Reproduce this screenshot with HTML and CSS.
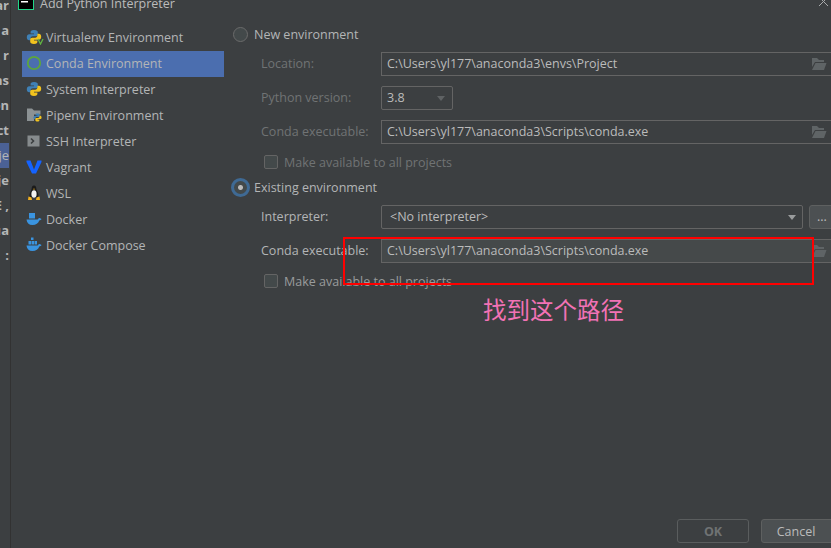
FILE: index.html
```html
<!DOCTYPE html>
<html lang="zh-CN">
<head>
	<meta charset="UTF-8">
	<title>Add Python Interpreter</title>
	<link rel="stylesheet" href="styles.css">
</head>
<body>
	<svg class="defs" width="0" height="0">
		<symbol id="py" viewBox="0 0 16 16">
			<path fill="#3f80b5" d="M8 1C5.2 1 4.6 2 4.6 3.2v1.4H8v.6H3.2C1.8 5.2.8 6.4.8 8.2s1 3 2.3 3h1.5V9.4c0-1.2 1-2.1 2.2-2.1h3.2c1 0 1.8-.8 1.8-1.8V3.200C11.800 2 10.800 1 8 1z"/>
			<path fill="#f2c31e" d="M8 15c2.800 0 3.400-1 3.400-2.200v-1.400H8v-.6h4.800c1.400 0 2.400-1.200 2.400-3s-1-3-2.300-3h-1.500v1.800c0 1.200-1 2.100-2.200 2.100H6.000c-1 0-1.800.8-1.800 1.800v2.300C4.200 14 5.200 15 8 15z"/>
		</symbol>
		<symbol id="whale" viewBox="0 0 16 16">
			<path fill="#3a94e0" d="M.5 8.500h11c.6-.1 1-.6 1.100-1.300.7-.4 1.200-.2 2.900.8-.5 1-1.300 1.300-2.200 1.400C12.200 12.200 10 14 6.500 14 2.800 14 .8 12 .5 8.500z"/>
		</symbol>
		<symbol id="folder" viewBox="0 0 16 14">
			<path fill="#5f6466" d="M1 1h5l2 2h5v2H4L1 10z"/>
			<path fill="#5f6466" d="M4.500 6H15.500L13 13H1z"/>
		</symbol>
	</svg>

	<div class="page">
		<div class="behind">
			<span>ar</span>
			<span>a</span>
			<span>r</span>
			<span>ns</span>
			<span>on</span>
			<span>ct</span>
			<span class="cur">oje</span>
			<span>oje</span>
			<span>, E</span>
			<span>ua</span>
			<span>:</span>
		</div>

		<div class="dialog">
			<div class="title">
				<svg class="logo" width="16" height="20" viewBox="0 0 16 20">
					<rect x=".5" y=".5" width="15" height="19" fill="#000" stroke="#21d789"/>
					<rect x="3" y="11" width="7" height="1.500" fill="#fff"/>
					<rect x="3" y="5" width="8" height="3" fill="#fff"/>
				</svg>
				<span class="title-text">Add Python Interpreter</span>
				<svg class="close" width="10" height="10" viewBox="0 0 10 10">
					<path d="M0 1l9 9M9 1l-9 9" stroke="#a9abac" fill="none"/>
				</svg>
			</div>

			<div class="main">
				<ul class="types">
					<li>
						<svg class="ico" width="16" height="16"><use href="#py"/></svg>
						<svg class="ico-v" width="7" height="7" viewBox="0 0 7 7"><path d="M1 1l2.500 5L6 1" stroke="#62b543" stroke-width="1.300" fill="none"/></svg>
						Virtualenv Environment
					</li>
					<li class="active">
						<svg class="ico" width="16" height="16" viewBox="0 0 16 16">
							<circle cx="8" cy="8" r="6.200" fill="none" stroke="#5da63c" stroke-width="1.800"/>
						</svg>
						Conda Environment
					</li>
					<li>
						<svg class="ico" width="16" height="16"><use href="#py"/></svg>
						System Interpreter
					</li>
					<li>
						<svg class="ico" width="16" height="16" viewBox="0 0 16 16">
							<path fill="#8c9294" d="M1 1.500h5l2 2h6.500v4H8V14H1z"/>
							<svg x="7" y="6" width="9" height="9" viewBox="0 0 16 16"><use href="#py" width="16" height="16"/></svg>
						</svg>
						Pipenv Environment
					</li>
					<li>
						<svg class="ico" width="16" height="16" viewBox="0 0 16 16">
							<rect x="1.500" y="2.500" width="12" height="11" fill="#868b8d"/>
							<path d="M5 5.500l2.500 2.500L5 10.500" stroke="#3c3f41" stroke-width="1.600" fill="none"/>
						</svg>
						SSH Interpreter
					</li>
					<li>
						<svg class="ico" width="16" height="16" viewBox="0 0 16 16">
							<path fill="#1563ff" d="M.5 1.500h4l3.500 9 3.500-9h4V3L10 14.500H6L.5 3z"/>
						</svg>
						Vagrant
					</li>
					<li>
						<svg class="ico" width="16" height="16" viewBox="0 0 16 16">
							<path fill="#1b1b1b" d="M8 .5c-1.800 0-2.300 1.500-2.300 3 0 1.500-2.200 4-2.200 6.500 0 1 .4 2 1 2.500h7c.6-.5 1-1.500 1-2.500 0-2.500-2.200-5-2.200-6.500C10.300 2 9.800.5 8 .5z"/>
							<ellipse cx="8" cy="9" rx="2.600" ry="3.800" fill="#f1f1f1"/>
							<path fill="#f2b01e" d="M2.500 11.500l3 1 .5 2.500H2zM13.500 11.500l-3 1-.5 2.500h4zM7 3.800h2L8 5z"/>
						</svg>
						WSL
					</li>
					<li>
						<svg class="ico" width="16" height="16" viewBox="0 0 16 16">
							<use href="#whale" width="16" height="16"/>
							<rect x="3" y="2" width="6" height="5.500" fill="#3a94e0"/>
						</svg>
						Docker
					</li>
					<li>
						<svg class="ico" width="16" height="16" viewBox="0 0 16 16">
							<use href="#whale" width="16" height="16"/>
							<rect x="5" y=".5" width="2.500" height="2.500" fill="#3a94e0"/>
							<rect x="2.500" y="4" width="2.500" height="3.500" fill="#3a94e0"/>
							<rect x="5.500" y="4" width="2.500" height="3.500" fill="#3a94e0"/>
							<rect x="8.500" y="4" width="2.500" height="3.500" fill="#3a94e0"/>
						</svg>
						Docker Compose
					</li>
				</ul>

				<div class="form">
					<div class="radio-row">
						<span class="radio"></span>
						New environment
					</div>
					<div class="row dim">
						<label>Location:</label>
						<div class="field">
							<span class="field-text">C:\Users\yl177\anaconda3\envs\Project</span>
							<svg width="16" height="14"><use href="#folder"/></svg>
						</div>
					</div>
					<div class="row dim">
						<label>Python version:</label>
						<div class="select short">
							<span class="select-text">3.8</span>
							<i class="arrow arrow-dim"></i>
						</div>
					</div>
					<div class="row dim">
						<label>Conda executable:</label>
						<div class="field">
							<span class="field-text">C:\Users\yl177\anaconda3\Scripts\conda.exe</span>
							<svg width="16" height="14"><use href="#folder"/></svg>
						</div>
					</div>
					<div class="check-row dim">
						<span class="check"></span>
						Make available to all projects
					</div>

					<div class="radio-row second">
						<span class="radio on"></span>
						Existing environment
					</div>
					<div class="row">
						<label>Interpreter:</label>
						<div class="select wide">
							<span class="select-text">&lt;No interpreter&gt;</span>
							<i class="arrow"></i>
						</div>
						<div class="more">...</div>
					</div>
					<div class="row">
						<label>Conda executable:</label>
						<div class="field edit">
							<span class="field-text">C:\Users\yl177\anaconda3\Scripts\conda.exe</span>
							<svg width="16" height="14"><use href="#folder"/></svg>
						</div>
					</div>
					<div class="check-row">
						<span class="check"></span>
						Make available to all projects
					</div>
				</div>
			</div>

			<div class="footer">
				<div class="btn ok">OK</div>
				<div class="btn">Cancel</div>
			</div>
		</div>

		<!-- 截图上的标注 -->
		<div class="mark"></div>
		<div class="note">找到这个路径</div>
	</div>
</body>
</html>
```

FILE: styles.css
```css
html, body{
	margin: 0;
	padding: 0;
	height: 100%;
	overflow: hidden;
	background: #3c3f41;
}
ul, li{
	margin: 0;
	padding: 0;
	list-style: none;
}
.defs{
	position: absolute;
}
.page{
	position: relative;
	display: flex;
	width: 845px;
	height: 548px;
	font-family: "Open Sans", "Noto Sans", sans-serif;
	font-size: 12.500px;
	color: #bbb;
}

/* 后面那个窗口露出来的一条 */
.behind{
	display: flex;
	flex-direction: column;
	flex: none;
	width: 9px;
	margin-right: 1px;
	overflow: hidden;
	font-weight: 700;
	font-size: 13px;
	white-space: nowrap;
	background: #3c3f41;
}
.behind span{
	flex: none;
	position: relative;
	top: -7px;
	width: 9px;
	height: 25px;
	line-height: 25px;
	direction: rtl;
	color: #b4b6b7;
}
.behind .cur{
	background: #4b6195;
	font-weight: 400;
}

.dialog{
	display: flex;
	flex-direction: column;
	flex: 1;
	min-width: 0;
	border-left: 1px solid #323232;
}
.title{
	display: flex;
	align-items: flex-end;
	flex: none;
	height: 10px;
	padding-left: 7px;
}
.logo{
	flex: none;
}
.title-text{
	flex: 1;
	height: 10px;
	margin-left: 6px;
	line-height: 7px;
}
.close{
	flex: none;
	margin: 0 16px 4px 0;
}
.main{
	display: flex;
	flex: 1;
	min-height: 0;
}

/* 左边列表 */
.types{
	flex: none;
	width: 202px;
	margin: 15px 8px 0 11px;
}
.types li{
	position: relative;
	display: flex;
	align-items: center;
	gap: 4px;
	box-sizing: border-box;
	height: 26px;
	padding: 0 0 2px 4px;
	white-space: nowrap;
	color: #b3b5b6;
}
.types li.active{
	background: #4b6eaf;
}
.ico{
	flex: none;
}
.ico-v{
	position: absolute;
	left: 15px;
	top: 13px;
}

/* 右边表单 */
.form{
	flex: 1;
	min-width: 0;
	padding-top: 15px;
}
.radio-row{
	display: flex;
	align-items: center;
	gap: 6px;
	height: 18px;
	color: #b3b5b6;
}
.radio-row.second{
	margin-top: 7px;
}
.radio{
	flex: none;
	box-sizing: border-box;
	width: 15px;
	height: 15px;
	margin-left: 1px;
	border: 1px solid #6b6b6b;
	border-radius: 50%;
	background: #43494a;
}
.radio.on{
	width: 19px;
	height: 19px;
	margin-left: -1px;
	margin-right: -2px;
	border: 3px solid #3f6a94;
	background: radial-gradient(circle, #bbb 0 2px, #43494a 3px);
}
.row{
	display: flex;
	align-items: center;
	height: 24px;
	margin-top: 10px;
	padding-left: 29px;
}
.radio-row + .row{
	margin-top: 9px;
}
.row label{
	flex: none;
	width: 120px;
	padding-bottom: 2px;
	color: #b3b5b6;
}
.dim label, .check-row.dim{
	color: #707374;
}
.field{
	display: flex;
	align-items: center;
	justify-content: space-between;
	flex: 1;
	box-sizing: border-box;
	height: 24px;
	padding: 0 18px 2px 5px;
	border: 1px solid #646464;
	border-right: 0;
	min-width: 0;
}
.field svg{
	margin-top: 2px;
}
.field.edit{
	background: #45494a;
}
.field-text, .select-text{
	white-space: nowrap;
}
.select{
	display: flex;
	align-items: center;
	justify-content: space-between;
	flex: none;
	box-sizing: border-box;
	height: 24px;
	padding-bottom: 2px;
	border: 1px solid #646464;
	border-radius: 2px;
}
.select.short{
	width: 72px;
	padding-left: 5px;
	padding-right: 6px;
}
.select.wide{
	width: 422px;
	padding-left: 8px;
	padding-right: 5px;
}
.arrow{
	flex: none;
	width: 0;
	height: 0;
	margin: 2px 1px 0 0;
	border: 4px solid transparent;
	border-top: 5px solid #9a9c9d;
	border-bottom: 0;
}
.arrow-dim{
	border-top-color: #5f6264;
}
.more{
	flex: none;
	box-sizing: border-box;
	width: 30px;
	height: 24px;
	margin-left: 6px;
	padding-left: 7px;
	line-height: 22px;
	border: 1px solid #5e6060;
	border-radius: 3px;
	background: #4c5052;
}
.check-row{
	display: flex;
	align-items: center;
	gap: 6px;
	height: 18px;
	margin-top: 9px;
	padding-left: 32px;
	color: #999b9c;
}
.check{
	flex: none;
	box-sizing: border-box;
	width: 14px;
	height: 14px;
	border: 1px solid #646464;
	border-radius: 2px;
	background: #43494a;
}
.footer{
	display: flex;
	justify-content: flex-end;
	gap: 12px;
	flex: none;
	padding-bottom: 5px;
}
.btn{
	box-sizing: border-box;
	width: 72px;
	height: 24px;
	line-height: 23px;
	text-align: center;
	border: 1px solid #5e6060;
	border-radius: 3px;
	background: #4c5052;
	color: #bbb;
}
.btn:last-child{
	width: 84px;
	padding-right: 14px;
}
.btn.ok{
	background: none;
	border-color: #5a5d5e;
	color: #6f7273;
	font-weight: 700;
}

/* 红框和粉字 */
.mark{
	position: absolute;
	left: 343px;
	top: 237px;
	box-sizing: border-box;
	width: 471px;
	height: 48px;
	border: 2px solid #f00;
}
.note{
	position: absolute;
	left: 483px;
	top: 293px;
	font-family: "Noto Sans CJK SC", sans-serif;
	font-size: 23.500px;
	line-height: 32px;
	color: #f272b5;
	white-space: nowrap;
}
```
